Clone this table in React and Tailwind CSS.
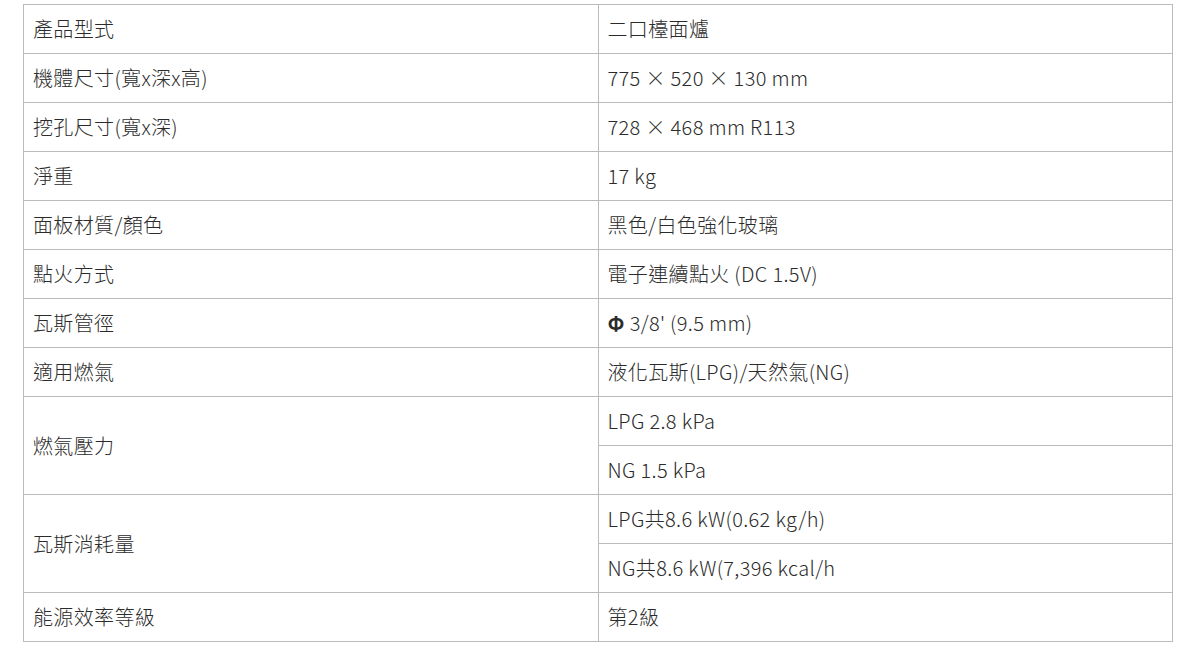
import React from 'react';

const rows = [
  ['產品型式', ['二口檯面爐']],
  ['機體尺寸(寬x深x高)', ['775 × 520 × 130 mm']],
  ['挖孔尺寸(寬x深)', ['728 × 468 mm R113']],
  ['淨重', ['17 kg']],
  ['面板材質/顏色', ['黑色/白色強化玻璃']],
  ['點火方式', ['電子連續點火 (DC 1.5V)']],
  ['瓦斯管徑', [<><span className="font-bold">Φ</span> 3/8' (9.5 mm)</>]],
  ['適用燃氣', ['液化瓦斯(LPG)/天然氣(NG)']],
  ['燃氣壓力', ['LPG 2.8 kPa', 'NG 1.5 kPa']],
  ['瓦斯消耗量', ['LPG共8.6 kW(0.62 kg/h)', 'NG共8.6 kW(7,396 kcal/h']],
  ['能源效率等級', ['第2級']],
];

const cell = 'border border-[#bbbbbb] h-[49px] px-[9px] py-0 align-middle text-left font-light';

export default function App() {
  return (
    <div className="bg-white w-[1182px] h-[649px] pt-1 pl-[23px] text-[#2b2b2b] text-[20px] tracking-[0.35px] font-['Noto_Sans_CJK_TC','Noto_Sans',sans-serif]">
      <table className="border-collapse w-[1150px] table-fixed">
        <tbody>
          {rows.map(([label, values]) =>
            values.map((v, i) => (
              <tr key={label + i}>
                {i === 0 && (
                  <td className={cell} rowSpan={values.length}>{label}</td>
                )}
                <td className={cell}>{v}</td>
              </tr>
            ))
          )}
        </tbody>
      </table>
    </div>
  );
}
